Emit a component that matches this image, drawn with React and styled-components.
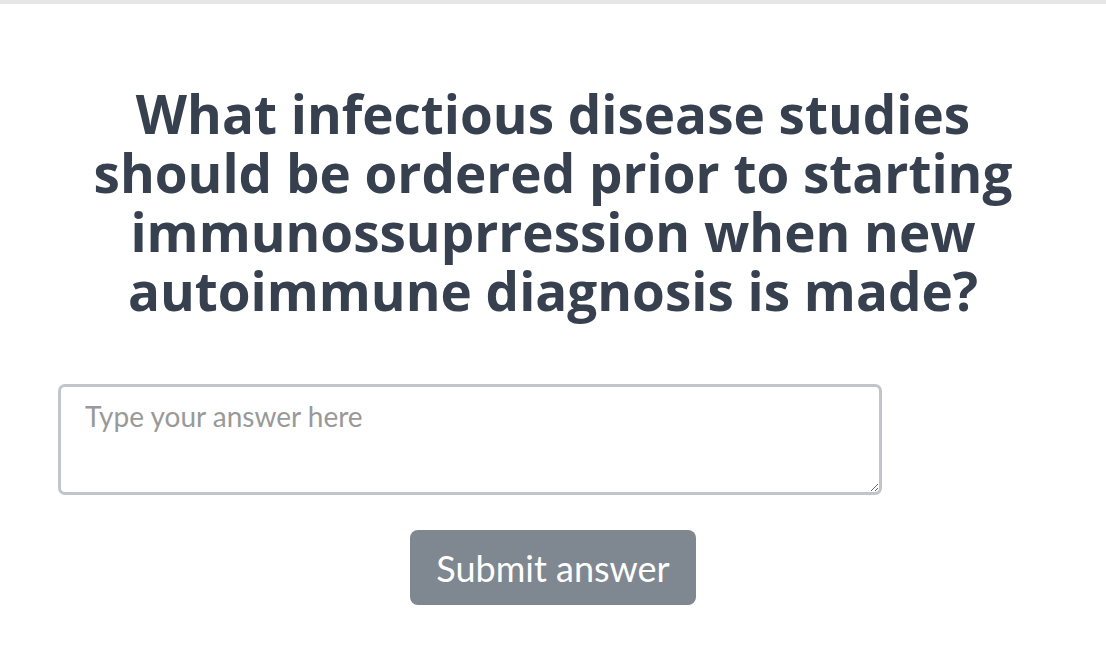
import React from 'react';
import styled, { createGlobalStyle } from 'styled-components';

const GlobalStyle = createGlobalStyle`
  html, body {
    margin: 0;
    padding: 0;
    background: #fff;
  }
  body {
    font-family: Lato, "Liberation Sans", sans-serif;
  }
`;

export default function App() {
  return (
    <>
      <GlobalStyle />
      <TopBar />
      <StyledMain>
        <Question>
          What infectious disease studies
          <br />
          should be ordered prior to starting
          <br />
          immunossuprression when new
          <br />
          autoimmune diagnosis is made?
        </Question>
        <AnswerForm onSubmit={(e) => e.preventDefault()}>
          <AnswerBox placeholder='Type your answer here' />
          <SubmitButton type='submit'>Submit answer</SubmitButton>
        </AnswerForm>
      </StyledMain>
    </>
  );
}

const TopBar = styled.div`
  height: 4px;
  background: #e6e6e6;
`;
const StyledMain = styled.main`
  width: 1106px;
  margin: 0 auto;
  padding-top: 80px;
  box-sizing: border-box;
`;
const Question = styled.h1`
  margin: 0;
  text-align: center;
  font-family: "Open Sans", sans-serif;
  font-weight: 700;
  font-size: 53px;
  line-height: 59px;
  color: #36404e;
`;
const AnswerForm = styled.form`
  display: flex;
  flex-direction: column;
  align-items: center;
  margin-top: 64px;
`;
const AnswerBox = styled.textarea`
  display: block;
  align-self: flex-start;
  margin-left: 58px;
  width: 824px;
  height: 111px;
  box-sizing: border-box;
  padding: 13px 24px;
  border: 3px solid #c1c5c9;
  border-radius: 7px;
  font-family: Lato, sans-serif;
  font-size: 28px;
  line-height: 1.2;
  color: #333;
  outline: none;
  &::placeholder {
    color: #999;
  }
`;
const SubmitButton = styled.button`
  margin-top: 35px;
  width: 286px;
  height: 75px;
  border: none;
  border-radius: 8px;
  background: #7f8790;
  color: #fff;
  font-family: Lato, sans-serif;
  font-size: 36px;
  cursor: pointer;
`;
